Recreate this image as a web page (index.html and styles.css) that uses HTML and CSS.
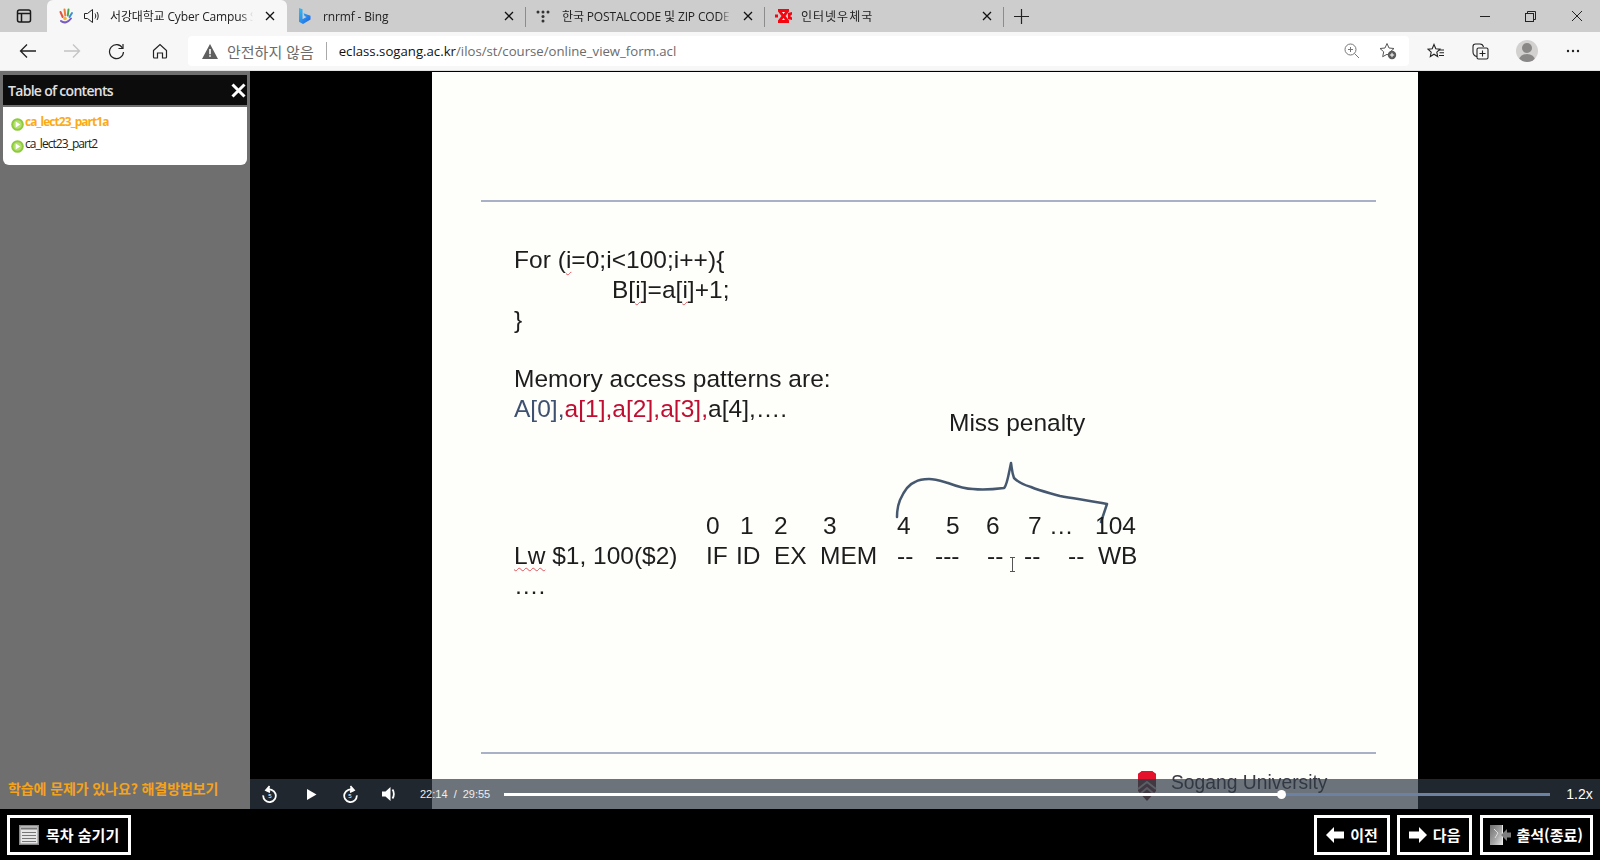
FILE: index.html
```html
<!DOCTYPE html>
<html lang="ko">
<head>
    <meta charset="UTF-8">
    <title>서강대학교 Cyber Campus</title>
    <link rel="stylesheet" href="styles.css">
</head>
<body>
    <div class="tabbar">
        <div class="tab-toggle">
            <svg width="16" height="16" viewBox="0 0 16 16" fill="none" stroke="#1a1a1a" stroke-width="1.5"><rect x="1.5" y="2" width="13" height="12" rx="2"/><path d="M1.5 5.5h13M5.5 5.5V14" /></svg>
        </div>
        <div class="tab active">
            <svg class="favicon" width="18" height="18" viewBox="0 0 18 18" fill="none" stroke-width="2" stroke-linecap="round">
                <path d="M3.500 5l2.200 5" stroke="#e5533d"/><path d="M7.500 2.500l.8 6" stroke="#ef7d3a"/><path d="M11.500 2.500L10.800 8.500" stroke="#4aa84a"/><path d="M15 6l-2.500 4" stroke="#3d8fd1"/><path d="M4 14c3 2.500 7 1.500 10-2.500" stroke="#7a5bc0"/><circle cx="8" cy="11.500" r="1.800" fill="#f5b52e" stroke="none"/>
            </svg>
            <svg class="speaker" width="18" height="18" viewBox="0 0 18 18" fill="none" stroke="#222" stroke-width="1"><path d="M1.500 6.500h3l5-4v13l-5-4h-3z"/><path d="M12 6.500c1 1.500 1 3.500 0 5M14 5c1.600 2.500 1.600 5.500 0 8"/></svg>
            <span class="tab-title">서강대학교 Cyber Campus S</span>
            <span class="tab-close"><svg width="10" height="10" viewBox="0 0 10 10" stroke="#111" stroke-width="1.3"><path d="M1 1l8 8M9 1l-8 8"/></svg></span>
        </div>
        <div class="tab">
            <svg class="favicon" width="16" height="18" viewBox="0 0 16 18">
                <defs><linearGradient id="bing" x1="0" y1="0" x2="1" y2="1"><stop offset="0" stop-color="#37bdf0"/><stop offset="1" stop-color="#1c62e8"/></linearGradient></defs>
                <path d="M2 1l3.500 1.200v10l4-2.200-2-1-1-2.700 7 2.500v3.700L6 17l-4-2.300z" fill="url(#bing)"/>
            </svg>
            <span class="tab-title">rnrmf - Bing</span>
            <span class="tab-close"><svg width="10" height="10" viewBox="0 0 10 10" stroke="#111" stroke-width="1.3"><path d="M1 1l8 8M9 1l-8 8"/></svg></span>
        </div>
        <div class="tab postal">
            <svg class="favicon" width="14" height="14" viewBox="0 0 14 14" fill="#333"><circle cx="2" cy="3" r="1.500"/><circle cx="7" cy="3" r="1.500"/><circle cx="12" cy="3" r="1.500"/><circle cx="7" cy="7.500" r="1.500"/><circle cx="7" cy="12" r="1.500"/></svg>
            <span class="tab-title">한국 POSTALCODE 및 ZIP CODE</span>
            <span class="tab-close"><svg width="10" height="10" viewBox="0 0 10 10" stroke="#111" stroke-width="1.3"><path d="M1 1l8 8M9 1l-8 8"/></svg></span>
        </div>
        <div class="tab wide">
            <svg class="favicon" width="17" height="14" viewBox="0 0 17 14"><path d="M3 0h11v2.500L10.500 7 14 11.500V14H3v-2.500L6.500 7 3 2.500z" fill="#f4050f"/><path d="M0 5.500h3v3H0zM13 4l4-1v2.500L15 7l2 1.500V11l-4-1z" fill="#f4050f"/><path d="M7 3h3L8.500 5z" fill="#fff"/><path d="M7 11h3L8.500 9z" fill="#fff"/></svg>
            <span class="tab-title">인터넷우체국</span>
            <span class="tab-close"><svg width="10" height="10" viewBox="0 0 10 10" stroke="#111" stroke-width="1.3"><path d="M1 1l8 8M9 1l-8 8"/></svg></span>
        </div>
        <div class="tab-plus">
            <svg width="15" height="15" viewBox="0 0 15 15" stroke="#222" stroke-width="1.200"><path d="M7.500 0v15M0 7.500h15"/></svg>
        </div>
        <div class="window-btns">
            <svg width="10" height="10" viewBox="0 0 10 10" stroke="#222"><path d="M0 5.500h10"/></svg>
            <svg width="11" height="11" viewBox="0 0 11 11" fill="none" stroke="#222"><rect x=".5" y="2.500" width="8" height="8"/><path d="M2.500 2.500V.5h8v8H8.500"/></svg>
            <svg width="12" height="12" viewBox="0 0 12 12" stroke="#222"><path d="M1 1l10 10M11 1L1 11"/></svg>
        </div>
    </div>

    <div class="toolbar">
        <div class="nav-btns">
            <svg width="18" height="16" viewBox="0 0 18 16" fill="none" stroke="#222" stroke-width="1.300"><path d="M17 8H1.500M8 1.500L1.500 8 8 14.500"/></svg>
            <svg class="nav-fwd" width="18" height="16" viewBox="0 0 18 16" fill="none" stroke="#c4c4c4" stroke-width="1.300"><path d="M1 8h15.500M10 1.500L16.500 8 10 14.500"/></svg>
            <svg width="17" height="17" viewBox="0 0 17 17" fill="none" stroke="#222" stroke-width="1.200"><path d="M14.500 5A7 7 0 1 0 15.500 9"/><path d="M15 1v4.500h-4.500"/></svg>
            <svg width="16" height="16" viewBox="0 0 16 16" fill="none" stroke="#222" stroke-width="1.200"><path d="M1.500 7.500L8 1.500l6.500 6V14a1 1 0 0 1-1 1h-3v-5h-5v5h-3a1 1 0 0 1-1-1z"/></svg>
        </div>
        <div class="address">
            <svg class="warn" width="16" height="15" viewBox="0 0 16 15"><path d="M8 0l8 15H0z" fill="#5f5f5f"/><path d="M7.200 5h1.600v5.200H7.200zM7.200 11.200h1.600v1.600H7.200z" fill="#fff"/></svg>
            <span class="not-secure">안전하지 않음</span>
            <span class="addr-sep"></span>
            <span class="url"><b>eclass.sogang.ac.kr</b>/ilos/st/course/online_view_form.acl</span>
            <svg class="addr-icon" width="16" height="16" viewBox="0 0 16 16" fill="none" stroke="#777"><circle cx="6.500" cy="6.500" r="5.500"/><path d="M10.500 10.500L15 15M6.500 4v5M4 6.500h5"/></svg>
            <svg class="addr-icon star-add" width="18" height="18" viewBox="0 0 18 18"><path d="M8 1.500l2 4.500 5 .5-3.700 3.300 1 4.900L8 12.300 3.700 14.700l1-4.900L1 6.500 6 6z" fill="none" stroke="#555"/><circle cx="13" cy="13" r="4.200" fill="#5a5a5a"/><path d="M13 10.800v4.400M10.800 13h4.400" stroke="#fff"/></svg>
        </div>
        <div class="tool-btns">
            <svg width="18" height="17" viewBox="0 0 18 17" fill="none" stroke="#222" stroke-width="1.100"><path d="M7 1.500l1.800 4.300 4.200.4-3.200 2.900.9 4.400L7 11.200l-3.700 2.300.9-4.400L1 6.200l4.200-.4z"/><path d="M12 7h5M12.500 9.800H17M12 12.500h5"/></svg>
            <svg width="17" height="17" viewBox="0 0 17 17" fill="none" stroke="#222" stroke-width="1.100"><path d="M5 13.500C2.500 13 1 11.500 1 9V3.500C1 2 2 1 3.500 1H8c1.500 0 3 .8 3.500 3"/><rect x="5" y="5" width="11" height="11" rx="1.500"/><path d="M10.500 7.500v6M7.500 10.500h6"/></svg>
            <span class="avatar"><span class="avatar-head"></span><span class="avatar-body"></span></span>
            <svg class="dots" width="14" height="4" viewBox="0 0 14 4" fill="#222"><circle cx="2" cy="2" r="1.200"/><circle cx="7" cy="2" r="1.200"/><circle cx="12" cy="2" r="1.200"/></svg>
        </div>
    </div>

    <div class="main">
        <div class="sidebar">
            <div class="toc">
                <div class="toc-head">
                    <span>Table of contents</span>
                    <svg width="15" height="15" viewBox="0 0 15 15" stroke="#fff" stroke-width="3"><path d="M1.500 1.500l12 12M13.500 1.500l-12 12"/></svg>
                </div>
                <div class="toc-body">
                    <div class="toc-item current">
                        <svg width="13" height="13" viewBox="0 0 13 13"><circle cx="6.500" cy="6.500" r="6.300" fill="#8ecb3c"/><circle cx="6.500" cy="6.500" r="4.300" fill="#b4e070"/><path d="M4.700 3.500l4.600 3-4.600 3z" fill="#fff"/></svg>
                        <span>ca_lect23_part1a</span>
                    </div>
                    <div class="toc-item">
                        <svg width="13" height="13" viewBox="0 0 13 13"><circle cx="6.500" cy="6.500" r="6.300" fill="#8ecb3c"/><circle cx="6.500" cy="6.500" r="4.300" fill="#b4e070"/><path d="M4.700 3.500l4.600 3-4.600 3z" fill="#fff"/></svg>
                        <span>ca_lect23_part2</span>
                    </div>
                </div>
            </div>
            <div class="help">학습에 문제가 있나요? 해결방법보기</div>
        </div>

        <div class="player">
            <div class="slide">
                <div class="rule rule-top"></div>
                <div class="code">
                    <div>For (<u>i</u>=0;i&lt;100;i++){</div>
                    <div class="indent">B[<u>i</u>]=a[<u>i</u>]+1;</div>
                    <div>}</div>
                    <div class="spacer"></div>
                    <div>Memory access patterns are:</div>
                    <div><span class="blue">A[0],</span><span class="red">a[1],a[2],a[3],</span>a[4],….</div>
                </div>
                <div class="miss">Miss penalty</div>
                <svg class="brace" width="225" height="70" viewBox="0 0 225 70" fill="none" stroke="#46586f" stroke-width="2.500" stroke-linecap="round" stroke-linejoin="round"><path d="M5 60C5 52 6 48 8 43C12 34 17 27 23 25C28 22 32 22 37 22C43 22 49 24 56 26C64 29 72 32 81 32C90 33 104 32 112 31C115 29 117 15 119 6C120 12 120 16 122 21C126 25 132 28 139 30C148 34 158 36 168 39C185 42 200 44 215 47C213 53 211 59 209 65"/></svg>
                <div class="pipe">
                    <span class="c0">0</span><span class="c1">1</span><span class="c2">2</span><span class="c3">3</span><span class="c4">4</span><span class="c5">5</span><span class="c6">6</span><span class="c7">7</span><span class="c8">…</span><span class="c9">104</span>
                </div>
                <div class="pipe second">
                    <span class="label"><u class="squiggle">Lw</u> $1, 100($2)</span><span class="c0">IF</span><span class="s1">ID</span><span class="c2">EX</span><span class="s3">MEM</span><span class="c4">--</span><span class="s5">---</span><span class="s6">--</span><span class="s7">--</span><span class="s8">--</span><span class="s9">WB</span>
                </div>
                <div class="dots-line">….</div>
                <svg class="ibeam" width="7" height="15" viewBox="0 0 7 15" fill="none" stroke="#555"><path d="M1 .5h5M3.500.5v14M1 14.500h5"/></svg>
                <div class="rule rule-bottom"></div>
                <svg class="crest" width="22" height="32" viewBox="0 0 22 32"><path d="M2 4l4-3h10l4 3v17l-9 10-9-10z" fill="#6e3a42"/><path d="M2 4l4-3h10l4 3v6H2z" fill="#e5122c"/><path d="M2 19l9-7 9 7M4 24l7-6 7 6" fill="none" stroke="#c9b9bb" stroke-width="2"/></svg>
                <div class="uni">Sogang University</div>
            </div>
            <div class="controls">
                <svg class="ctl" width="16" height="18" viewBox="0 0 16 18" fill="none" stroke="#fff" stroke-width="1.800"><path d="M4.200 5.400a6.300 6.300 0 1 1-3 5"/><path d="M7.500 1L3.800 5.200l4.200 2" stroke-width="1.500" fill="#fff"/><text x="8" y="13" class="ctl-num">5</text></svg>
                <svg class="ctl ctl-play" width="11" height="13" viewBox="0 0 11 13" fill="#fff"><path d="M1 1v11l9.500-5.500z"/></svg>
                <svg class="ctl" width="16" height="18" viewBox="0 0 16 18" fill="none" stroke="#fff" stroke-width="1.800"><path d="M11.800 5.400a6.300 6.300 0 1 0 3 5"/><path d="M8.500 1l3.700 4.200-4.200 2" stroke-width="1.500" fill="#fff"/><text x="8" y="13" class="ctl-num">5</text></svg>
                <svg class="ctl ctl-vol" width="16" height="14" viewBox="0 0 16 14" fill="#fff"><path d="M0 4.500h3.500L8.500 0v14l-5-4.500H0z"/><path d="M10.500 2.500c1.800 2.500 1.800 6.500 0 9" fill="none" stroke="#fff" stroke-width="1.800"/></svg>
                <span class="time">22:14&nbsp; /</span>
                <span class="time total">29:55</span>
                <div class="progress"><div class="played"></div></div>
                <span class="speed">1.2x</span>
            </div>
        </div>
    </div>

    <div class="bottom">
        <div class="btn toc-btn">
            <svg width="20" height="20" viewBox="0 0 20 20"><rect width="20" height="20" fill="#8a8a8a"/><rect x="1.500" y="1.500" width="17" height="17" fill="#e6e6e6"/><path d="M2 2.500h16v2H2zM3 7h14v1H3zM3 10h14v1H3zM3 13h14v1H3zM3 16h14v1H3z" fill="#777"/></svg>
            <span>목차 숨기기</span>
        </div>
        <div class="bottom-right">
            <div class="btn">
                <svg width="18" height="16" viewBox="0 0 18 16" fill="#fff"><path d="M0 8l8-8v4.500h10v7H8V16z"/></svg>
                <span>이전</span>
            </div>
            <div class="btn">
                <svg width="18" height="16" viewBox="0 0 18 16" fill="#fff"><path d="M18 8l-8-8v4.500H0v7h10V16z"/></svg>
                <span>다음</span>
            </div>
            <div class="btn exit-btn">
                <svg width="21" height="22" viewBox="0 0 21 22">
                    <defs><linearGradient id="door" x1="0" y1="0" x2="1" y2="1"><stop offset="0" stop-color="#6e6e6e"/><stop offset=".6" stop-color="#a8a8a8"/><stop offset="1" stop-color="#e4e4e4"/></linearGradient></defs>
                    <path d="M0 1h12v20H0z" fill="url(#door)"/><path d="M12 1h1v20h-1z" fill="#e8e8e8"/><path d="M21 8.500h-4V5l-6 6 6 6v-3.500h4z" fill="#7d7d7d"/><path d="M4 5l4 4-3 5" fill="none" stroke="#ddd"/>
                </svg>
                <span>출석(종료)</span>
            </div>
        </div>
    </div>
</body>
</html>
```

FILE: styles.css
```css
* {
    box-sizing: border-box;
}
body {
    margin: 0;
    height: 860px;
    overflow: hidden;
    display: flex;
    flex-direction: column;
    background-color: #000;
    font-family: "Open Sans", "Noto Sans CJK KR", sans-serif;
}

/* browser tabs */
.tabbar {
    display: flex;
    align-items: center;
    height: 32px;
    background-color: #cdcdcd;
    font-size: 12px;
    color: #222;
}
.tab-toggle {
    display: flex;
    justify-content: center;
    width: 47px;
}
.tab {
    position: relative;
    display: flex;
    align-items: center;
    width: 239px;
    height: 32px;
    padding-left: 10px;
}
.tab.active {
    background-color: #f7f7f7;
    border-radius: 6px 6px 0 0;
    width: 240px;
}
.tab + .tab::after {
    content: "";
    position: absolute;
    right: 0;
    top: 7px;
    height: 20px;
    width: 1px;
    background-color: #8c8c8c;
}
.favicon {
    flex: none;
}
.speaker {
    margin-left: 8px;
}
.tab-title {
    flex: 1;
    min-width: 0;
    margin-left: 10px;
    white-space: nowrap;
    overflow: hidden;
    letter-spacing: -.15px;
    -webkit-mask-image: linear-gradient(to left, transparent 0, #000 12px);
    mask-image: linear-gradient(to left, transparent 0, #000 12px);
}
.tab.active .tab-title {
    margin-left: 9px;
}
.tab.postal .tab-title {
    margin-left: 12px;
}
.tab.wide .tab-title {
    letter-spacing: 1px;
    margin-left: 9px;
}
.tab-close {
    display: flex;
    justify-content: center;
    width: 34px;
    flex: none;
}
.tab-plus {
    display: flex;
    margin-left: 10px;
}
.window-btns {
    display: flex;
    align-items: center;
    gap: 35px;
    margin-left: auto;
    padding-right: 17px;
}

/* browser toolbar */
.toolbar {
    display: flex;
    align-items: center;
    height: 39px;
    background-color: #f7f7f7;
    border-bottom: 1px solid #e2e2e2;
}
.nav-btns {
    display: flex;
    align-items: center;
    gap: 27px;
    width: 188px;
    padding-left: 19px;
}
.nav-fwd {
    margin-left: -1px;
}
.address {
    display: flex;
    align-items: center;
    width: 1221px;
    height: 30px;
    background-color: #fff;
    border-radius: 4px;
    padding-left: 14px;
}
.not-secure {
    margin-left: 9px;
    font-size: 15px;
    color: #6b6b6b;
}
.addr-sep {
    width: 1px;
    height: 18px;
    margin: 0 12px;
    background-color: #a9a9a9;
}
.url {
    flex: 1;
    font-size: 13.200px;
    color: #6b6b6b;
}
.url b {
    font-weight: 400;
    color: #111;
}
.addr-icon {
    margin-right: 12px;
}
.star-add {
    margin-left: 7px;
    margin-right: 12px;
}
.tool-btns {
    display: flex;
    align-items: center;
    padding-left: 18px;
    gap: 27px;
}
.avatar {
    position: relative;
    width: 22px;
    height: 22px;
    border-radius: 50%;
    overflow: hidden;
    background-color: #d3d1cf;
}
.avatar-head {
    position: absolute;
    left: 6px;
    top: 3px;
    width: 10px;
    height: 10px;
    border-radius: 50%;
    background-color: #8a8886;
}
.avatar-body {
    position: absolute;
    left: 3px;
    top: 14px;
    width: 16px;
    height: 12px;
    border-radius: 50%;
    background-color: #8a8886;
}
.dots {
    margin-left: 1px;
}

/* page */
.main {
    flex: 1;
    display: flex;
    min-height: 0;
}
.sidebar {
    width: 250px;
    display: flex;
    flex-direction: column;
    justify-content: space-between;
    background-color: #6f6f6f;
    padding: 4px 3px 11px;
}
.toc-head {
    display: flex;
    align-items: center;
    justify-content: space-between;
    height: 30px;
    padding: 0 1px 0 5px;
    background-color: #0c0c0c;
    color: #e0e0e0;
    font-size: 14px;
    font-weight: 600;
    letter-spacing: -.7px;
}
.toc-body {
    height: 58px;
    margin-top: 2px;
    padding: 6px 0 0 8px;
    background-color: #fff;
    border-radius: 0 0 6px 6px;
}
.toc-item {
    display: flex;
    align-items: flex-start;
    height: 22px;
    font-size: 12px;
    letter-spacing: -.95px;
    color: #222;
}
.toc-item svg {
    margin: 5px 1px 0 0;
}
.toc-item.current {
    color: #fbab18;
    font-weight: 700;
}
.help {
    padding-left: 5px;
    font-size: 14px;
    font-weight: 700;
    color: #f5a31c;
    font-family: "Noto Sans CJK KR", sans-serif;
    letter-spacing: -.1px;
}

/* video */
.player {
    position: relative;
    flex: 1;
    background-color: #000;
    padding: 1px 0 0 182px;
}
.slide {
    position: relative;
    width: 986px;
    height: 100%;
    background-color: #fefefa;
    font-family: "Liberation Sans", sans-serif;
    font-size: 24.500px;
    color: #1d1d1d;
}
.slide > div:not(.rule), .slide > svg {
    filter: blur(.3px);
}
.rule {
    position: absolute;
    left: 49px;
    width: 895px;
    height: 2px;
    background-color: #a9b1c6;
}
.rule-top {
    top: 128px;
}
.rule-bottom {
    top: 680px;
}
.code {
    position: absolute;
    left: 82px;
    top: 173px;
    line-height: 30px;
    letter-spacing: .03px;
}
.code u, .squiggle {
    text-decoration: underline wavy #e2555f 1px;
    text-underline-offset: 3px;
}
.indent {
    padding-left: 98px;
}
.spacer {
    height: 29px;
}
.blue {
    color: #3f5170;
}
.red {
    color: #c00d32;
}
.miss {
    position: absolute;
    left: 517px;
    top: 337px;
}
.brace {
    position: absolute;
    left: 460px;
    top: 385px;
}
.pipe {
    position: absolute;
    left: 0;
    top: 440px;
    width: 100%;
    height: 30px;
}
.pipe span {
    position: absolute;
}
.pipe.second {
    top: 470px;
}
.label {
    left: 82px;
}
/* pipeline stages sit at fixed places on the slide */
.c0 { left: 274px; }
.c1 { left: 308px; }
.c2 { left: 342px; }
.c3 { left: 391px; }
.c4 { left: 465px; }
.c5 { left: 514px; }
.c6 { left: 554px; }
.c7 { left: 596px; }
.c8 { left: 617px; }
.c9 { left: 663px; }
.s1 { left: 304px; }
.s3 { left: 388px; }
.s5 { left: 503px; }
.s6 { left: 555px; }
.s7 { left: 592px; }
.s8 { left: 636px; }
.s9 { left: 666px; }
.dots-line {
    position: absolute;
    left: 82px;
    top: 500px;
}
.ibeam {
    position: absolute;
    left: 577px;
    top: 485px;
}
.crest {
    position: absolute;
    left: 704px;
    top: 698px;
}
.uni {
    position: absolute;
    left: 739px;
    top: 700px;
    font-size: 19.300px;
    color: #3b3b45;
}

/* control bar lies over the video */
.controls {
    position: absolute;
    left: 0;
    right: 0;
    bottom: 0;
    height: 30px;
    display: flex;
    align-items: center;
    padding-left: 12px;
    background-color: rgba(46, 56, 67, .7);
    color: #fff;
    font-family: "Liberation Sans", sans-serif;
}
.ctl {
    flex: none;
    margin-right: 24px;
}
.ctl-play {
    margin-left: 4px;
    margin-right: 25px;
}
.ctl-vol {
    margin-right: 22px;
}
.ctl-num {
    font-size: 6px;
    fill: #fff;
    stroke: none;
    text-anchor: middle;
}
.time {
    font-size: 11px;
    margin-right: 6px;
    color: #eee;
}
.time.total {
    margin-right: 14px;
}
.progress {
    width: 1046px;
    height: 3px;
    background-color: #6c82a3;
}
.played {
    position: relative;
    width: 778px;
    height: 3px;
    background-color: #fff;
}
.played::after {
    content: "";
    position: absolute;
    right: -4px;
    top: -3px;
    width: 9px;
    height: 9px;
    border-radius: 50%;
    background-color: #fff;
}
.speed {
    margin-left: 16px;
    font-size: 14px;
}

/* bottom buttons */
.bottom {
    display: flex;
    align-items: center;
    justify-content: space-between;
    height: 51px;
    padding: 0 7px;
    background-color: #000;
}
.bottom-right {
    display: flex;
    gap: 7px;
}
.btn {
    display: flex;
    align-items: center;
    gap: 6px;
    height: 40px;
    padding: 0 9px;
    border: 3px solid #fff;
    color: #fff;
    font-family: "Noto Sans CJK KR", sans-serif;
    font-size: 15px;
    font-weight: 700;
}
.toc-btn {
    gap: 7px;
}
.exit-btn {
    padding: 0 7px;
    gap: 5px;
    margin-left: 1px;
}
```
